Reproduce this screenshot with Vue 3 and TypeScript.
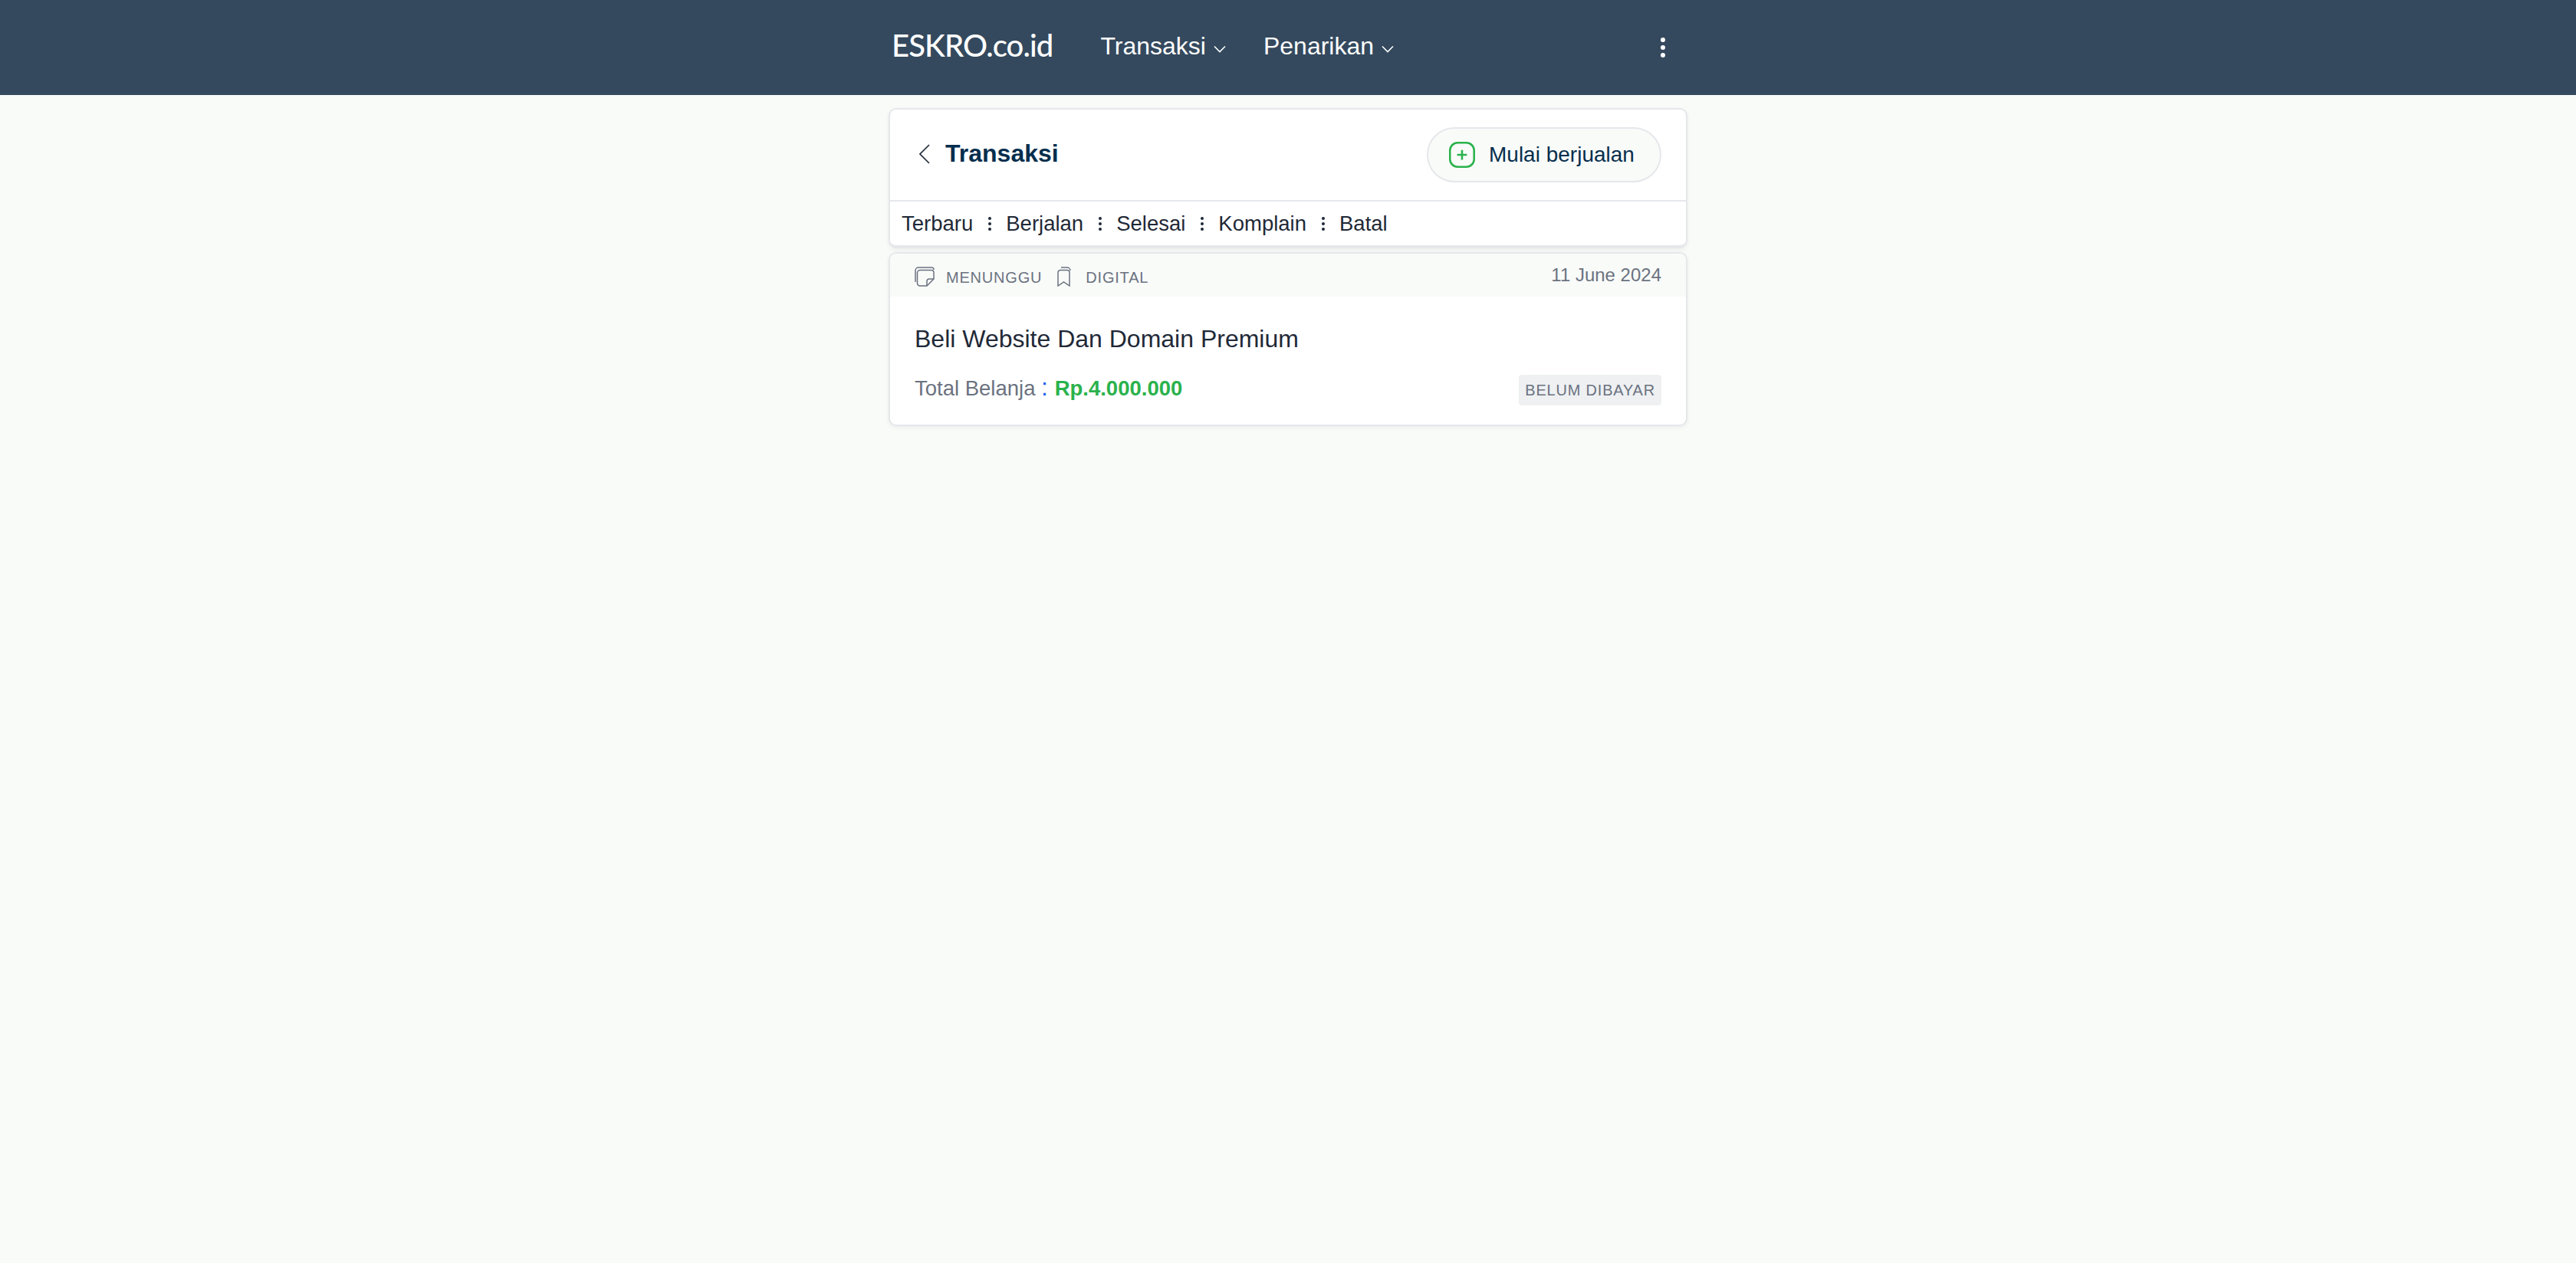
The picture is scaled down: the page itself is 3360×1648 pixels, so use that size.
<template>
  <div class="page">
    <header class="topbar">
      <nav class="topbar-inner">
        <a class="brand">ESKRO.co.id</a>
        <a class="nav-link">
          Transaksi
          <svg class="caret" viewBox="0 0 16 10"><path d="M1 1.5l7 7 7-7" /></svg>
        </a>
        <a class="nav-link second">
          Penarikan
          <svg class="caret" viewBox="0 0 16 10"><path d="M1 1.5l7 7 7-7" /></svg>
        </a>
        <span class="more"><i></i><i></i><i></i></span>
      </nav>
    </header>

    <main class="content">
      <section class="card filter-card">
        <div class="head">
          <div class="head-title">
            <svg class="back" viewBox="0 0 14 26"><path d="M13 1L1 13l12 12" /></svg>
            <h1>Transaksi</h1>
          </div>
          <button class="start">
            <svg class="plus" viewBox="0 0 32 32">
              <rect x="1.2" y="1.2" width="29.6" height="29.6" rx="9.5" />
              <path d="M16 10v12M10 16h12" />
            </svg>
            Mulai berjualan
          </button>
        </div>
        <div class="tabs">
          <template v-for="(tab, i) in tabs" :key="tab">
            <span v-if="i > 0" class="dots"><i></i><i></i><i></i></span>
            <a>{{ tab }}</a>
          </template>
        </div>
      </section>

      <section class="card order">
        <div class="order-head">
          <div class="meta">
            <svg class="meta-icon" viewBox="0 0 26 26">
              <path d="M5 1h17a3 3 0 0 1 3 3M1 20V5a4 4 0 0 1 4-4" />
              <path d="M7 4.500h15a3 3 0 0 1 3 3V16l-9 9H7a3.500 3.500 0 0 1-3.500-3.500V8A3.500 3.500 0 0 1 7 4.500z" />
              <path d="M25 16h-6a3 3 0 0 0-3 3v6" />
            </svg>
            <span class="meta-label">MENUNGGU</span>
            <svg class="meta-icon mark" viewBox="0 0 20 26">
              <path d="M6 4.500h9a3 3 0 0 1 3 3V25l-7.500-5L3 25V7.500a3 3 0 0 1 3-3z" />
              <path d="M7 1h8a4 4 0 0 1 4 4" />
            </svg>
            <span class="meta-label">DIGITAL</span>
          </div>
          <span class="date">11 June 2024</span>
        </div>
        <div class="order-body">
          <h2>Beli Website Dan Domain Premium</h2>
          <div class="order-foot">
            <div class="total">
              Total Belanja <b class="colon">:</b> <strong>Rp.4.000.000</strong>
            </div>
            <span class="badge">BELUM DIBAYAR</span>
          </div>
        </div>
      </section>
    </main>
  </div>
</template>

<script setup lang="ts">
const tabs: string[] = ["Terbaru", "Berjalan", "Selesai", "Komplain", "Batal"];
</script>

<style>
html,
body {
  margin: 0;
  background: #f9fbf9;
}
</style>

<style scoped>
.page {
  min-height: 1648px;
  background: #f9fbf9;
  font-family: "Liberation Sans", Arial, sans-serif;
  color: #1f2937;
}
.topbar {
  height: 124px;
  background: #34495e;
  display: flex;
  justify-content: center;
}
.topbar-inner {
  width: 1042px;
  display: flex;
  align-items: center;
  color: #fff;
  padding: 0 4px;
  box-sizing: border-box;
}
.brand {
  font-family: Lato, sans-serif;
  font-size: 40px;
  font-weight: 500;
  letter-spacing: -0.9px;
  margin-right: 62px;
  margin-top: -6px;
}
.nav-link {
  font-family: "Liberation Sans", sans-serif;
  font-size: 32px;
  display: flex;
  align-items: center;
  gap: 10px;
  margin-top: -4px;
}
.second {
  margin-left: 49px;
}
.caret {
  width: 16px;
  height: 10px;
  margin-top: 8px;
  fill: none;
  stroke: #fff;
  stroke-width: 1.6;
}
.more {
  margin-left: auto;
  margin-right: 25px;
  display: flex;
  flex-direction: column;
  gap: 4px;
}
.more i {
  width: 6px;
  height: 6px;
  border-radius: 50%;
  background: #fff;
}
.content {
  width: 1042px;
  margin: 0 auto;
  padding-top: 17px;
  display: flex;
  flex-direction: column;
  gap: 5px;
}
.card {
  background: #fff;
  border: 2px solid #e5e7eb;
  border-radius: 10px;
  box-shadow: 0 2px 6px rgba(0, 0, 0, 0.06);
  overflow: hidden;
}
.filter-card {
  border-bottom-width: 4px;
}
.head {
  height: 120px;
  box-sizing: border-box;
  border-bottom: 2px solid #e5e7eb;
  padding: 0 32px;
  display: flex;
  align-items: center;
  justify-content: space-between;
}
.head-title {
  display: flex;
  align-items: center;
  gap: 20px;
  padding-left: 6px;
  margin-top: -3px;
}
.back {
  width: 14px;
  height: 26px;
  fill: none;
  stroke: #1f2937;
  stroke-width: 1.6;
}
h1 {
  margin: 0;
  font-size: 32px;
  font-weight: 700;
  color: #052e4d;
}
.start {
  width: 306px;
  height: 72px;
  border: 2px solid #e5e7eb;
  border-radius: 36px;
  background: #f9fbf9;
  display: flex;
  align-items: center;
  gap: 18px;
  padding: 0 0 0 27px;
  font-family: "Liberation Sans", sans-serif;
  font-size: 28px;
  color: #052e4d;
}
.plus {
  width: 34px;
  height: 34px;
  fill: none;
  stroke: #2bb24c;
  stroke-width: 2.4;
}
.tabs {
  height: 57px;
  padding: 0 15px;
  display: flex;
  align-items: center;
  font-size: 27.5px;
}
.dots {
  width: 43px;
  display: flex;
  flex-direction: column;
  align-items: center;
  gap: 3px;
}
.dots i {
  width: 4px;
  height: 4px;
  border-radius: 50%;
  background: #1f2937;
}
.order-head {
  height: 56px;
  background: #f9fbf9;
  padding: 0 32px;
  display: flex;
  justify-content: space-between;
}
.meta {
  display: flex;
  align-items: center;
  height: 56px;
  margin-top: 3px;
}
.meta-icon {
  width: 26px;
  height: 26px;
  flex-shrink: 0;
  margin-top: -3px;
  fill: none;
  stroke: #6b7280;
  stroke-width: 1.5;
}
.mark {
  width: 20px;
  margin-left: 18px;
}
.meta-label {
  margin-left: 15px;
  font-size: 20px;
  letter-spacing: 0.8px;
  color: #6b7280;
}
.mark + .meta-label {
  margin-left: 19px;
}
.date {
  font-size: 24px;
  color: #6b7280;
  margin-top: 14px;
}
.order-body {
  padding: 37px 32px 25px;
}
h2 {
  margin: 0;
  font-size: 32px;
  font-weight: 400;
  color: #1f2937;
}
.order-foot {
  display: flex;
  align-items: center;
  justify-content: space-between;
  margin-top: 28px;
}
.total {
  font-size: 27.5px;
  color: #6b7280;
  margin-top: -8px;
}
.colon {
  font-size: 32px;
  font-weight: 400;
  color: #2563eb;
  margin-right: 1px;
}
.total strong {
  color: #2bb24c;
}
.badge {
  height: 40px;
  line-height: 40px;
  padding: 0 8px;
  background: #eef0f2;
  border-radius: 4px;
  font-size: 20px;
  letter-spacing: 0.8px;
  color: #6b7280;
}
</style>
